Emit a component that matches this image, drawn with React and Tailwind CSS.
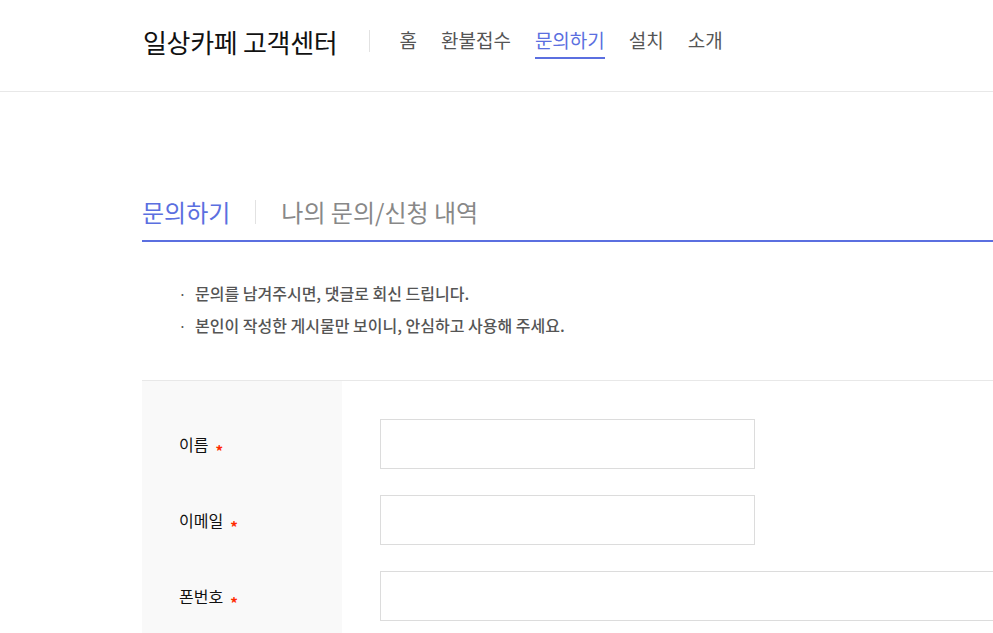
const font = { fontFamily: '"Noto Sans CJK KR", "Noto Sans", sans-serif' }

const navItems = ['홈', '환불접수', '문의하기', '설치', '소개']

function Field({ label, wide }) {
  return (
    <div className="flex h-[76px]">
      <div className="w-[200px] shrink-0 bg-[#f9f9f9] pl-[37px] flex items-center">
        <span className="text-[16px] text-[#111]">{label}</span>
        <span className="ml-[7px] mt-[12px] text-[15px] leading-none font-bold text-[#ff2a00]">*</span>
      </div>
      <div className="flex items-center pl-[38px] grow">
        <input
          type="text"
          className={`h-[50px] border border-[#dcdcdc] bg-white outline-none ${wide ? 'w-[700px]' : 'w-[375px]'}`}
        />
      </div>
    </div>
  )
}

export default function App() {
  return (
    <div className="h-screen w-full overflow-hidden bg-white" style={font}>
      <header className="h-[92px] border-b border-[#e8e8e8]">
        <div className="ml-[143px] flex h-[82px] items-center">
          <h1 className="text-[26px] font-normal tracking-[-0.3px] text-[#111]">일상카페 고객센터</h1>
          <span className="ml-[32px] h-[22px] w-px bg-[#e2e2e2]" />
          <nav className="ml-[29px] flex gap-[24px] text-[19px] text-[#555]">
            {navItems.map((item) => (
              <a
                key={item}
                className={`relative pb-[2px] ${item === '문의하기' ? 'text-[#5b6fe0]' : ''}`}
              >
                {item}
                {item === '문의하기' && (
                  <span className="absolute left-0 right-0 top-[31px] h-[2px] bg-[#5b6fe0]" />
                )}
              </a>
            ))}
          </nav>
        </div>
      </header>

      <main className="ml-[142px] w-[1200px]">
        <div className="mt-[100px] flex h-[50px] items-center border-b-2 border-[#5b6fe0] pb-[8px]">
          <span className="text-[24px] text-[#5b6fe0]">문의하기</span>
          <span className="ml-[25px] mr-[25px] h-[24px] w-px bg-[#e2e2e2]" />
          <span className="text-[24px] text-[#888]">나의 문의/신청 내역</span>
        </div>

        <ul className="mt-[40px] ml-[37px] space-y-[9px] text-[16px] font-medium text-[#555]">
          <li className="flex">
            <span className="w-[16px] text-[12px] leading-[23px]">·</span>
            <span className="leading-[23px]">문의를 남겨주시면, 댓글로 회신 드립니다.</span>
          </li>
          <li className="flex">
            <span className="w-[16px] text-[12px] leading-[23px]">·</span>
            <span className="leading-[23px]">본인이 작성한 게시물만 보이니, 안심하고 사용해 주세요.</span>
          </li>
        </ul>

        <div className="mt-[43px] border-t border-[#e8e8e8]">
          <div className="flex">
            <div className="w-[200px] bg-[#f9f9f9] h-[25px]" />
          </div>
          <Field label="이름" />
          <Field label="이메일" />
          <Field label="폰번호" wide />
        </div>
      </main>
    </div>
  )
}
